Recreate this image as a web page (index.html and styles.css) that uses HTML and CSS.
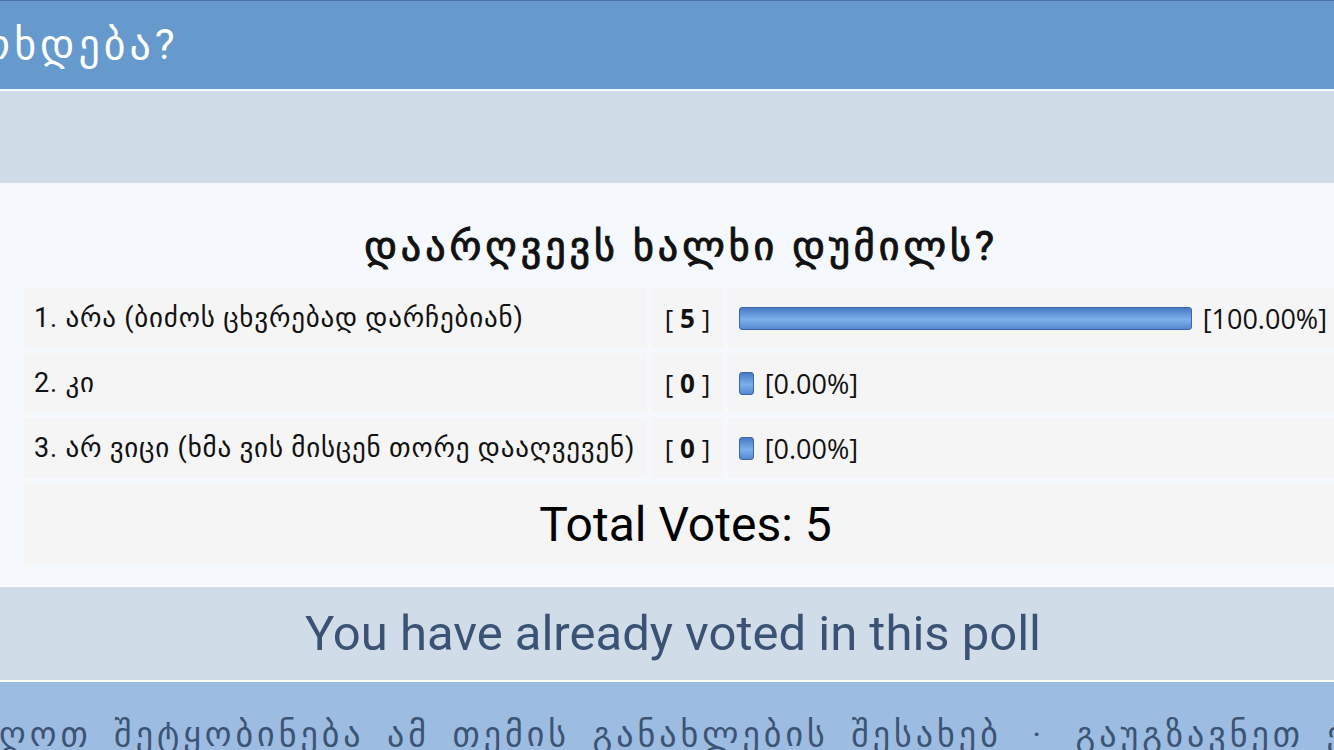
FILE: index.html
```html
<!DOCTYPE html>
<html lang="ka">
  <head>
    <meta charset="UTF-8" />
    <meta name="viewport" content="width=device-width, initial-scale=1.0" />
    <title>დაარღვევს ხალხი დუმილს?</title>
    <link rel="stylesheet" href="styles.css">
  </head>
  <body>
    <div class="page">
      <!-- topic title bar -->
      <div class="maintitle">
        <span class="maintitle-text">რა მოხდება?</span>
      </div>
      <div class="subbar"></div>

      <!-- poll results -->
      <div class="poll">
        <h2 class="poll-question">დაარღვევს ხალხი დუმილს?</h2>
        <table class="poll-table">
          <tr>
            <td class="choice">1. არა (ბიძოს ცხვრებად დარჩებიან)</td>
            <td class="votes">[ <b>5</b> ]</td>
            <td class="result">
              <span class="bar" style="width: 453px"></span>
              <span class="pct">[100.00%]</span>
            </td>
          </tr>
          <tr>
            <td class="choice">2. კი</td>
            <td class="votes">[ <b>0</b> ]</td>
            <td class="result">
              <span class="bar" style="width: 15px"></span>
              <span class="pct">[0.00%]</span>
            </td>
          </tr>
          <tr>
            <td class="choice">3. არ ვიცი (ხმა ვის მისცენ თორე დააღვევენ)</td>
            <td class="votes">[ <b>0</b> ]</td>
            <td class="result">
              <span class="bar" style="width: 15px"></span>
              <span class="pct">[0.00%]</span>
            </td>
          </tr>
          <tr>
            <td class="total" colspan="3">Total Votes: 5</td>
          </tr>
        </table>
      </div>

      <div class="voted">You have already voted in this poll</div>

      <!-- topic options -->
      <div class="options">
        <span class="options-text">მიიღოთ შეტყობინება ამ თემის განახლების შესახებ <span class="sep">·</span> გაუგზავნეთ ეს თემა მეგობარს</span>
      </div>
    </div>
  </body>
</html>
```

FILE: styles.css
```css
/* poll page, zoomed mobile view */
body {
  margin: 0;
  overflow: hidden;
  background: #f5f8fc;
  font-family: Roboto, "DejaVu Sans", sans-serif;
}

.page {
  width: 1362px;
}

.maintitle {
  height: 88px;
  border-top: 1px solid #4a72a6;
  background-color: #6699cc;
  color: #ffffff;
  font-size: 42px;
  line-height: 88px;
  white-space: nowrap;
  text-indent: -126px;
  letter-spacing: 4px;
}

.subbar {
  height: 92px;
  border-top: 2px solid #f5f8fc;
  background-color: #d1dce9;
}

.poll {
  background-color: #f5f8fc;
  padding: 40px 0 15px;
}

.poll-question {
  margin: 0 0 13px;
  text-align: center;
  font-size: 40px;
  font-weight: normal;
  -webkit-text-stroke: 1px #111111;
  color: #111111;
  letter-spacing: 4px;
}

.poll-table {
  width: 1333px;
  margin-left: 19px;
  border-spacing: 5px;
  font-size: 27px;
  color: #111111;
}

.poll-table td {
  background-color: #f5f5f5;
  height: 60px;
  padding: 0;
  white-space: nowrap;
}

.choice {
  width: 613px;
  padding-left: 10px !important;
  letter-spacing: 0.8px;
}

.votes {
  width: 71px;
  text-align: center;
  font-family: "Open Sans", sans-serif;
  font-size: 26px;
  letter-spacing: 0;
}

.votes b {
  font-weight: bold;
}

.result {
  padding-left: 11px !important;
}

.bar {
  display: inline-block;
  vertical-align: middle;
  height: 23px;
  border: 1px solid #3a65ad;
  border-radius: 3px;
  background: linear-gradient(#477ac3, #7cb0ea 55%, #5589d0);
  box-sizing: border-box;
}

.pct {
  vertical-align: middle;
  margin-left: 4px;
  font-family: "Open Sans", sans-serif;
  font-size: 27px;
}

.poll-table td.total {
  height: 82px;
  text-align: center;
  font-size: 48px;
  color: #000000;
}

.voted {
  height: 93px;
  border-top: 2px solid #ffffff;
  border-bottom: 2px solid #ffffff;
  background-color: #d1dce9;
  color: #3a5374;
  font-size: 49px;
  line-height: 93px;
  text-align: center;
  padding-right: 16px;
}

.options {
  height: 69px;
  background-color: #9dbce2;
  color: #3c5474;
  font-size: 34px;
  line-height: 104px;
  white-space: nowrap;
  text-indent: -66px;
  letter-spacing: 4px;
  word-spacing: 10px;
}

.sep {
  margin: 0 8px;
}
```
